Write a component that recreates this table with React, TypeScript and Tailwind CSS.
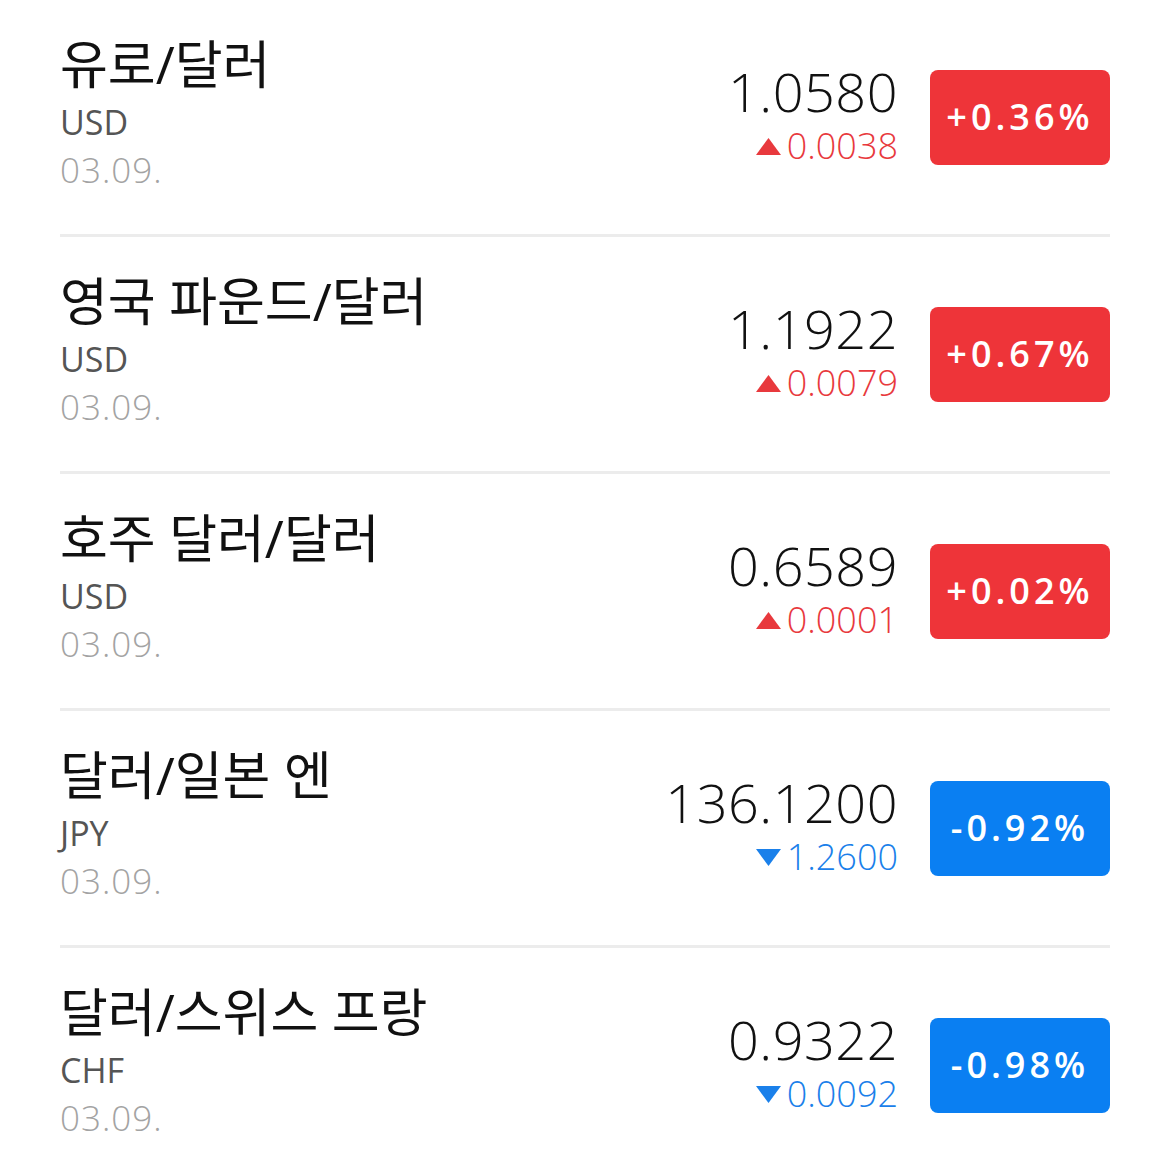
const rates = [
  { name: "유로/달러", unit: "USD", date: "03.09.", price: "1.0580", change: "0.0038", pct: "+0.36%", up: true },
  { name: "영국 파운드/달러", unit: "USD", date: "03.09.", price: "1.1922", change: "0.0079", pct: "+0.67%", up: true },
  { name: "호주 달러/달러", unit: "USD", date: "03.09.", price: "0.6589", change: "0.0001", pct: "+0.02%", up: true },
  { name: "달러/일본 엔", unit: "JPY", date: "03.09.", price: "136.1200", change: "1.2600", pct: "-0.92%", up: false },
  { name: "달러/스위스 프랑", unit: "CHF", date: "03.09.", price: "0.9322", change: "0.0092", pct: "-0.98%", up: false },
];

const font = { fontFamily: '"Open Sans", "Noto Sans CJK KR", sans-serif' };

export default function App() {
  return (
    <div className="w-[1170px] bg-white px-[60px]" style={font}>
      {rates.map((r, i) => (
        <div
          key={r.name}
          className={
            i < rates.length - 1
              ? "flex h-[237px] items-center border-b-[3px] border-[#ececec]"
              : "flex h-[234px] items-center"
          }
        >
          <div className="flex flex-1 flex-col pb-[12px]">
            <div className="text-[52px] leading-[69px] text-[#111]">{r.name}</div>
            <div className="text-[34px] leading-[48px] text-[#555]">{r.unit}</div>
            <div className="text-[35px] font-light leading-[48px] tracking-[1px] text-[#a3a3a3]">{r.date}</div>
          </div>
          <div className="flex flex-col items-end pb-[6px] pr-[32px]">
            <div className="text-[54px] font-[350] leading-[64px] tracking-[0.5px] text-[#111]">{r.price}</div>
            <div
              className={
                r.up
                  ? "flex items-center text-[36px] font-light leading-[46px] text-[#e8393d]"
                  : "flex items-center text-[36px] font-light leading-[46px] text-[#1a80ea]"
              }
            >
              <svg width="25" height="17" viewBox="0 0 25 17" className="mr-[6px]">
                {r.up ? (
                  <polygon points="12.5,0 25,17 0,17" fill="currentColor" />
                ) : (
                  <polygon points="0,0 25,0 12.5,17" fill="currentColor" />
                )}
              </svg>
              {r.change}
            </div>
          </div>
          <div
            className={
              r.up
                ? "flex h-[95px] w-[180px] items-center justify-center rounded-[8px] bg-[#ee3439] text-[36px] font-semibold tracking-[4px] text-white"
                : "flex h-[95px] w-[180px] items-center justify-center rounded-[8px] bg-[#0a7ff2] text-[36px] font-semibold tracking-[4px] text-white"
            }
          >
            {r.pct}
          </div>
        </div>
      ))}
    </div>
  );
}
